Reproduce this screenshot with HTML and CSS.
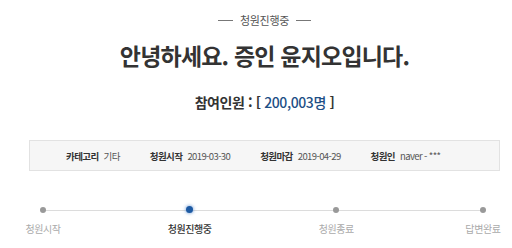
FILE: index.html
```html
<!DOCTYPE html>
<html lang="ko">
<head>
<meta charset="utf-8">
<link rel="stylesheet" href="styles.css">
</head>
<body>
<div class="page">
  <div class="status"><span class="rule"></span><span class="status-text">청원진행중</span><span class="rule"></span></div>
  <h1 class="title">안녕하세요. 증인 윤지오입니다.</h1>
  <p class="count">참여인원 : [ <span class="num">200,003명</span> ]</p>
  <div class="info">
    <div class="item"><b>카테고리</b><span>기타</span></div>
    <div class="item"><b>청원시작</b><span>2019-03-30</span></div>
    <div class="item"><b>청원마감</b><span>2019-04-29</span></div>
    <div class="item"><b>청원인</b><span>naver - ***</span></div>
  </div>
  <div class="steps">
    <div class="step"><i class="dot"></i><span class="label">청원시작</span></div>
    <div class="step active"><i class="dot"></i><span class="label">청원진행중</span></div>
    <div class="step"><i class="dot"></i><span class="label">청원종료</span></div>
    <div class="step"><i class="dot"></i><span class="label">답변완료</span></div>
  </div>
</div>
</body>
</html>
```

FILE: styles.css
```css
* { box-sizing: border-box; }
html, body { margin: 0; padding: 0; background: #fff; }
body { font-family: "Noto Sans CJK KR", "Noto Sans", sans-serif; color: #333; }
.page { width: 471px; margin-left: 29px; }
.status {
  display: flex; justify-content: center; align-items: center; gap: 7px;
  padding-top: 12px; height: 28px;
}
.rule { width: 15px; height: 1px; background: #777; }
.status-text { font-size: 11px; color: #555; letter-spacing: -0.3px; line-height: 14px; }
.title {
  margin: 12px 0 0; text-align: center; font-size: 23px; font-weight: 700;
  line-height: 30px; letter-spacing: -0.8px; color: #333;
}
.count {
  margin: 22px 0 0; text-align: center; font-size: 14px; font-weight: 700;
  line-height: 20px; letter-spacing: -0.4px; color: #333;
}
.num { color: #1d4f86; font-weight: 500; }
.info {
  margin-top: 28px; height: 31px; border: 1px solid #e2e2e2; background: #f6f6f6;
  display: flex; align-items: center; gap: 30px; padding-left: 36px;
  font-size: 9.5px; letter-spacing: -0.6px;
}
.item { display: flex; gap: 5px; align-items: center; }
.item b { font-weight: 700; color: #333; }
.item span { color: #555; }
.steps {
  position: relative; display: flex; justify-content: space-between;
  margin: 35px 0 0 -8px; width: 484px;
}
.steps::before {
  content: ""; position: absolute; left: 21px; right: 21px; top: 4px;
  height: 1px; background: #dcdcdc;
}
.step { position: relative; width: 44px; display: flex; flex-direction: column; align-items: center; }
.dot { display: block; width: 6px; height: 6px; border-radius: 50%; background: #999; margin-top: 1px; }
.active .dot { width: 7px; height: 7px; background: #1d5aa3; margin-top: 0; box-shadow: 0 0 3px 1px rgba(60,120,200,0.45); }
.label { margin-top: 9px; font-size: 10px; color: #aaa; letter-spacing: -0.4px; white-space: nowrap; line-height: 13px; }
.active .label { color: #333; font-weight: 500; }
```
